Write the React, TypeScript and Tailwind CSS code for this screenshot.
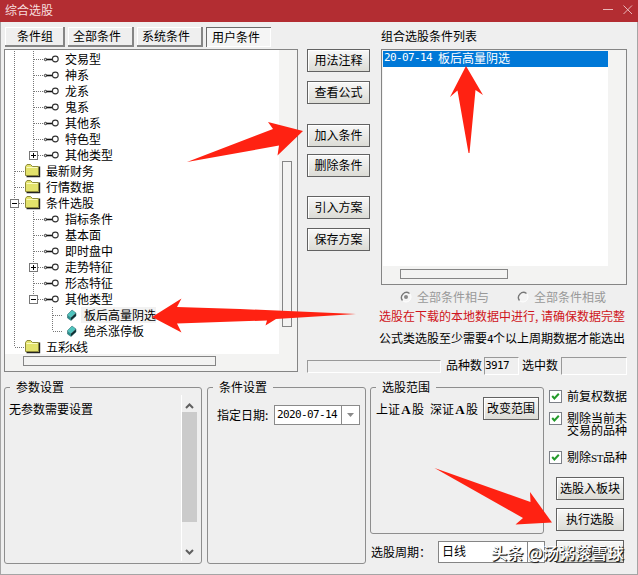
import React from "react";
import clsx from "clsx";

type IconKind = "node" | "folder" | "gem";

interface TreeRow {
  level: number;
  label: React.ReactNode;
  icon: IconKind;
  guides?: boolean[];
  toggle?: "+" | "-";
  last?: boolean;
}

const K = <span className="inline-block w-1.5 -ml-px mr-px font-['Liberation_Serif',serif] text-[12px] leading-3">K</span>;
const A = (
  <span className="inline-block w-3 text-center font-['Liberation_Serif',serif] text-[13px] font-bold leading-3">A</span>
);

const rows: TreeRow[] = [
  { level: 1, label: "交易型", icon: "node", guides: [true] },
  { level: 1, label: "神系", icon: "node", guides: [true] },
  { level: 1, label: "龙系", icon: "node", guides: [true] },
  { level: 1, label: "鬼系", icon: "node", guides: [true] },
  { level: 1, label: "其他系", icon: "node", guides: [true] },
  { level: 1, label: "特色型", icon: "node", guides: [true] },
  { level: 1, label: "其他类型", icon: "node", guides: [true], toggle: "+", last: true },
  { level: 0, label: "最新财务", icon: "folder" },
  { level: 0, label: "行情数据", icon: "folder" },
  { level: 0, label: "条件选股", icon: "folder", toggle: "-" },
  { level: 1, label: "指标条件", icon: "node", guides: [true] },
  { level: 1, label: "基本面", icon: "node", guides: [true] },
  { level: 1, label: "即时盘中", icon: "node", guides: [true] },
  { level: 1, label: "走势特征", icon: "node", guides: [true], toggle: "+" },
  { level: 1, label: "形态特征", icon: "node", guides: [true] },
  { level: 1, label: "其他类型", icon: "node", guides: [true], toggle: "-", last: true },
  { level: 2, label: "板后高量阴选", icon: "gem", guides: [true, false] },
  { level: 2, label: "绝杀涨停板", icon: "gem", guides: [true, false], last: true },
  { level: 0, label: <>五彩{K}线</>, icon: "folder", last: true },
];

function Guide({ visible }: { visible: boolean }) {
  return (
    <svg width="19" height="16" className="shrink-0">
      {visible && <path d="M9.5 0V16" stroke="#777" strokeDasharray="1 1" />}
    </svg>
  );
}

function Connector({ toggle, last }: { toggle?: "+" | "-"; last?: boolean }) {
  return (
    <svg width="19" height="16" className="shrink-0">
      <path d={last ? "M9.5 0V8" : "M9.5 0V16"} stroke="#777" strokeDasharray="1 1" />
      <path d="M10 8.5H19" stroke="#777" strokeDasharray="1 1" />
      {toggle && (
        <>
          <rect x="5.5" y="4.5" width="8" height="8" fill="#fff" stroke="#777" />
          <path d={toggle === "+" ? "M7 8.5h5M9.5 6v5" : "M7 8.5h5"} stroke="#000" />
        </>
      )}
    </svg>
  );
}

function RowIcon({ kind }: { kind: IconKind }) {
  if (kind === "folder") {
    return (
      <svg width="19" height="16" className="shrink-0">
        <path d="M2.5 13.5H15.5V3.5" fill="none" stroke="#222" strokeWidth="1.4" />
        <path d="M1.5 12.5V3.5L3 1.5H6.5L8.5 3.5H14.5V12.5Z" fill="#e3e26c" stroke="#8f8b3a" />
        <path d="M2.5 4.5H13.5" stroke="#fbfbc2" />
      </svg>
    );
  }
  if (kind === "gem") {
    return (
      <svg width="19" height="16" className="shrink-0">
        <path d="M5.5 7.5L10 3L14 6L9 10.5Z" fill="#4fc4be" />
        <path d="M5.5 7.5L9 10.5V13.5L5.5 11Z" fill="#2b8f8d" />
        <path d="M9 13.5V10.5L14 6V9Z" fill="#0d2f33" />
        <path d="M5.5 7.5L10 3L14 6V9L9 13.5L5.5 11Z" fill="none" stroke="#1c5d60" strokeWidth=".5" />
      </svg>
    );
  }
  return (
    <svg width="19" height="16" className="shrink-0">
      <circle cx="2.5" cy="8.5" r="1.2" fill="#ddd" stroke="#333" />
      <path d="M3.5 8.5H9" stroke="#111" strokeWidth="1.6" />
      <circle cx="12.3" cy="8" r="2.9" fill="#fff" stroke="#333" strokeWidth="1.1" />
    </svg>
  );
}

function Mono({ children, className }: { children: React.ReactNode; className?: string }) {
  return (
    <span className={clsx("font-['DejaVu_Sans_Mono',monospace] text-[11px] tracking-[-0.62px]", className)}>
      {children}
    </span>
  );
}

function Button({ children, className }: { children: React.ReactNode; className?: string }) {
  return (
    <button
      className={clsx(
        "flex h-[23px] shrink-0 items-center justify-center whitespace-nowrap border border-[#626262] bg-linear-to-b from-[#f8f8f8] to-[#dcdcd6] pb-0.5 shadow-[inset_1px_1px_0_#fff]",
        className,
      )}
    >
      {children}
    </button>
  );
}

function Tab({ children, className, active }: { children: React.ReactNode; className?: string; active?: boolean }) {
  return (
    <button
      className={clsx(
        "flex h-5 items-center whitespace-nowrap",
        active
          ? "border-l border-t border-[#6b6b6b] bg-[#f5f5f5] pb-0.5 shadow-[inset_-1px_-1px_0_#fff]"
          : "border-b-2 border-r-2 border-[#858585] bg-[#efefef] shadow-[inset_1px_1px_0_#fff]",
        className,
      )}
    >
      {children}
    </button>
  );
}

function Group({ title, className, children }: { title: string; className?: string; children?: React.ReactNode }) {
  return (
    <fieldset className={clsx("relative min-w-0 rounded-[3px] border border-[#8e8e8e]", className)}>
      <span className="absolute -top-[9px] left-[5px] bg-[#efefef] px-[6px]">{title}</span>
      {children}
    </fieldset>
  );
}

function Check({ children, className }: { children: React.ReactNode; className?: string }) {
  return (
    <div className={clsx("flex", className)}>
      <svg width="13" height="13" className="mr-[5px] shrink-0">
        <rect x=".5" y=".5" width="12" height="12" fill="#fff" stroke="#7c8087" />
        <path d="M3.2 6L5.4 8.5L9.8 3.8" fill="none" stroke="#239a2a" strokeWidth="2" />
      </svg>
      <div className="whitespace-nowrap leading-3">{children}</div>
    </div>
  );
}

function Radio({ checked, children }: { checked?: boolean; children: React.ReactNode }) {
  return (
    <div className="flex w-[117px] shrink-0 items-center whitespace-nowrap text-[#999]">
      <svg width="12" height="12" className="mr-[5px] shrink-0">
        <circle cx="6" cy="6" r="5" fill="#f4f4f4" stroke="#fff" />
        <path d="M2.5 9.5A5 5 0 0 1 9.5 2.5" fill="none" stroke="#777" strokeWidth="1.4" />
        {checked && <circle cx="6" cy="6" r="2" fill="#888" />}
      </svg>
      {children}
    </div>
  );
}

function Field({ className, children }: { className?: string; children?: React.ReactNode }) {
  return (
    <div className={clsx("flex items-center border border-b-white border-l-[#999] border-r-white border-t-[#999]", className)}>
      {children}
    </div>
  );
}

function ConditionTree() {
  return (
    <div className="mt-0.5 h-[323px] border border-[#858585] bg-[#f3f3f2]">
      <div className="flex h-[304px]">
        <div className="h-[304px] w-[274px] overflow-hidden bg-white pt-px">
          {rows.map((row, i) => (
            <div key={i} className="flex h-4 items-center whitespace-nowrap">
              {row.guides?.map((visible, g) => <Guide key={g} visible={visible} />)}
              <Connector toggle={row.toggle} last={row.last} />
              <RowIcon kind={row.icon} />
              <span className={clsx("pl-[3px] leading-4", i === 16 && "bg-[#f2f2f2]")}>{row.label}</span>
            </div>
          ))}
        </div>
        <div className="ml-[3px] mt-[111px] h-[166px] w-2.5 border border-[#858585]" />
      </div>
      <div className="ml-[18px] mt-[2px] h-2.5 w-[193px] border border-[#858585]" />
    </div>
  );
}

function Arrows() {
  return (
    <svg className="pointer-events-none absolute inset-0" width="638" height="575" fill="#ff2212">
      <path d="M187 162L273 129L268 122L303 131L277.5 155.5L279 145.5Z" />
      <path d="M466 66L450 97L457.5 90.5L468.5 153H469.5L475.5 90L483 95Z" />
      <path d="M152 317L181.5 298.5L177 307L240 309L356 314L276 319L265.5 325.5L267 320.5L177 323.5L181.5 332.5Z" />
      <path d="M434.5 468L530.5 502L530 492L552 522.5L515.5 524.5L523 518Z" />
    </svg>
  );
}

export default function App() {
  return (
    <div className="relative flex h-[575px] w-[638px] flex-col overflow-hidden bg-[#efefef] font-['Noto_Sans_CJK_SC',sans-serif] text-[12px] leading-4 text-black">
      <header className="flex h-[22px] shrink-0 items-center justify-between bg-[#b32d32] pb-0.5 pl-[5px] pr-[5px] text-[#f6dede]">
        <span>综合选股</span>
        <svg width="30" height="12" fill="none" stroke="#e8b8b9">
          <path d="M0 5.5H10M20.5 1.5L29 10M29 1.5L20.5 10" />
        </svg>
      </header>

      <main className="flex min-h-0 flex-1 flex-col border-b border-l border-r border-[#a5a5a5] pl-[3px] pt-[5px]">
        <div className="flex h-[345px] shrink-0">
          <section className="w-[294px]">
            <div className="ml-px flex">
              <Tab className="mr-[3px] w-[60px] pl-3">条件组</Tab>
              <Tab className="mr-[3px] w-[66px] pl-[5px]">全部条件</Tab>
              <Tab className="mr-[3px] w-[66px] pl-[5px]">系统条件</Tab>
              <Tab className="w-[65px] pl-[5px]" active>用户条件</Tab>
            </div>
            <ConditionTree />
          </section>

          <section className="ml-[9px] w-[63px] pt-[22px]">
            <Button className="w-full">用法注释</Button>
            <Button className="mt-[9px] w-full">查看公式</Button>
            <Button className="mt-5 w-full">加入条件</Button>
            <Button className="mt-[7px] w-full">删除条件</Button>
            <Button className="mt-[19px] w-full">引入方案</Button>
            <Button className="mt-[9px] w-full">保存方案</Button>
          </section>

          <section className="ml-[11px] w-[246px]">
            <div className="h-[22px] whitespace-nowrap pt-px">组合选股条件列表</div>
            <div className="h-[236px] border border-[#858585] bg-[#f3f3f2] pl-px pt-px">
              <div className="h-[215px] w-[225px] bg-white">
                <div className="flex h-4 items-center whitespace-pre bg-[#0078d7] pb-0.5 pl-px text-white">
                  <Mono>{"20-07-14 "}</Mono>
                  <span className="leading-3">板后高量阴选</span>
                </div>
              </div>
              <div className="ml-[17px] mt-[3px] h-2.5 w-[108px] border border-[#858585]" />
            </div>
            <div className="ml-[19px] mt-1 flex h-4">
              <Radio checked>全部条件相与</Radio>
              <Radio>全部条件相或</Radio>
            </div>
            <div className="-ml-0.5 mt-[3px] whitespace-nowrap text-[#cf1420]">
              选股在下载的本地数据中进行<span className="inline-block w-1.5">,</span>请确保数据完整
            </div>
            <div className="-ml-0.5 mt-[6px] whitespace-nowrap">
              公式类选股至少需要<Mono>4</Mono>个以上周期数据才能选出
            </div>
          </section>
        </div>

        {/* 选股进度与统计 */}
        <div className="-mt-[15px] ml-[303px] flex h-[18px] shrink-0 items-center whitespace-nowrap">
          <Field className="h-[13px] w-[134px]" />
          <span className="-mt-0.5 ml-[5px]">品种数</span>
          <Field className="ml-0.5 h-[18px] w-[35px]"><Mono>3917</Mono></Field>
          <span className="-mt-0.5 ml-[3px]">选中数</span>
          <Field className="ml-[3px] h-[18px] w-[66px]" />
        </div>

        <div className="mt-3 flex items-start">
          <Group title="参数设置" className="flex h-[177px] w-[198px] justify-between">
            <span className="ml-1 mt-[13px]">无参数需要设置</span>
            <div className="mr-1 mt-[7px] flex h-[166px] w-4 flex-col items-center border-l border-white pt-2">
              <svg width="9" height="6" fill="none" stroke="#606060" strokeWidth="2"><path d="M1 5L4.5 1.5L8 5" /></svg>
              <div className="mt-[3px] h-[110px] w-full bg-[#cbcbcb]" />
              <svg width="9" height="6" className="mt-[27px]" fill="none" stroke="#606060" strokeWidth="2"><path d="M1 1L4.5 4.5L8 1" /></svg>
            </div>
          </Group>

          <Group title="条件设置" className="ml-[5px] h-[177px] w-[159px]">
            <div className="ml-[9px] mt-[17px] flex items-center whitespace-nowrap">
              <span className="w-[57px]">指定日期:</span>
              <div className="flex h-5 w-[86px] items-center border border-[#8a8a8a] bg-white pl-0.5">
                <Mono className="w-16">2020-07-14</Mono>
                <span className="flex h-full flex-1 items-center justify-center border-l border-[#8a8a8a]">
                  <svg width="7" height="4" fill="#8a8a8a"><path d="M0 0H7L3.5 4Z" /></svg>
                </span>
              </div>
            </div>
          </Group>

          <div className="ml-1 w-[175px]">
            <Group title="选股范围" className="h-[147px] w-[174px]">
              <div className="ml-[5px] mt-[9px] flex items-center whitespace-nowrap">
                <span className="w-[54px]">上证{A}股</span>
                <span className="w-[53px]">深证{A}股</span>
                <Button className="h-6 w-14">改变范围</Button>
              </div>
            </Group>
            <div className="ml-px mt-[7px] flex items-center whitespace-nowrap">
              <span className="w-[67px]">选股周期：</span>
              <div className="flex h-[22px] w-[107px] items-center justify-between border border-[#858585] bg-white pl-[3px]">
                <span className="-mt-0.5">日线</span>
                <span className="flex h-full w-[17px] items-center justify-center border-l border-[#858585]">
                  <svg width="7" height="4" fill="#8a8a8a"><path d="M0 0H7L3.5 4Z" /></svg>
                </span>
              </div>
            </div>
          </div>

          <div className="ml-1 w-[80px]">
            <Check className="mt-[3px] h-[22px]">前复权数据</Check>
            <Check className="h-[39px]">剔除当前未<br />交易的品种</Check>
            <Check className="h-[26px]">
              剔除<span className="inline-block w-3 font-['Liberation_Serif',serif] text-[11px] tracking-[-0.5px]">ST</span>品种
            </Check>
            <Button className="ml-[7px] w-[68px]">选股入板块</Button>
            <Button className="ml-[7px] mt-2 w-[68px]">执行选股</Button>
            <Button className="ml-[7px] mt-[9px] w-[68px]">关闭</Button>
          </div>
        </div>
      </main>

      <Arrows />
      <div className="absolute left-[491px] top-[540px] whitespace-nowrap text-[16.2px] font-medium leading-6 text-white [text-shadow:1px_1px_0_#222,1px_1px_1px_#333]">
        头条 @汤粥滚雪球
      </div>
    </div>
  );
}
